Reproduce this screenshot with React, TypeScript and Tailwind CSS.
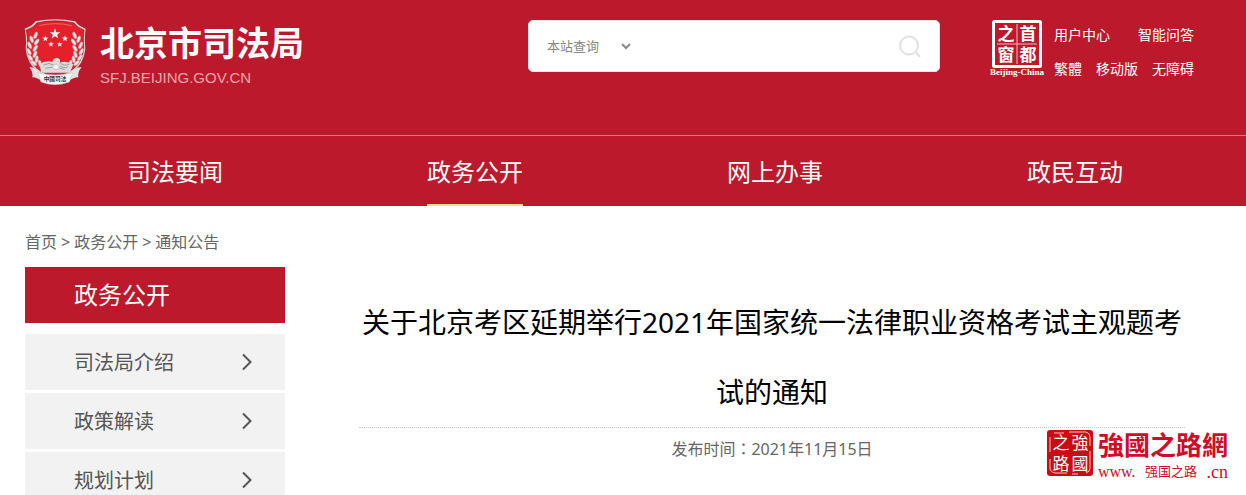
const NAV = ["司法要闻", "政务公开", "网上办事", "政民互动"];
const ACTIVE = "政务公开";

const SIDE_MENU = ["司法局介绍", "政策解读", "规划计划"];

const TOP_LINKS = [
    { gap: "gap-7", items: ["用户中心", "智能问答"] },
    { gap: "gap-3.5", items: ["繁體", "移动版", "无障碍"] },
];

const STARS = [
    { x: 105, y: 60, s: 17 },
    { x: 76, y: 74, s: 10 },
    { x: 135, y: 74, s: 10 },
    { x: 93, y: 91, s: 9 },
    { x: 119, y: 91, s: 9 },
];

// Wheat leaves on the left side of the shield, mirrored for the right
const LEAVES = [
    { x: 47, y: 64, r: 22 },
    { x: 35, y: 76, r: -20 },
    { x: 50, y: 84, r: 34 },
    { x: 29, y: 94, r: -24 },
    { x: 46, y: 103, r: 32 },
    { x: 27, y: 113, r: -30 },
    { x: 45, y: 121, r: 22 },
    { x: 31, y: 131, r: -38 },
    { x: 50, y: 136, r: 8 },
    { x: 41, y: 147, r: -48 },
    { x: 60, y: 149, r: -14 },
];

function Leaves() {
    return (
        <g fill="#e9e4e4" stroke="#c5868a" strokeWidth="1.5">
            {LEAVES.map((l, i) => (
                <ellipse key={i} cx={l.x} cy={l.y} rx="5" ry="11" transform={`rotate(${l.r} ${l.x} ${l.y})`} />
            ))}
        </g>
    );
}

function Emblem() {
    return (
        <svg viewBox="12 12 192 204" className="h-[68px] w-16 shrink-0" aria-hidden="true">
            <path
                d="M46 22Q105 9 166 22Q174 36 197 44Q193 72 196 104Q193 150 152 178L105 200L60 178Q20 150 17 104Q20 72 14 44Q38 36 46 22Z"
                fill="#d9cfcf"
            />
            <path
                d="M50 27Q105 14 162 27Q171 41 192 48Q188 74 191 104Q187 150 146 174L105 190L66 174Q26 150 22 104Q25 74 19 48Q42 41 50 27Z"
                fill="#e5202a"
                stroke="#8f1620"
                strokeWidth="2"
            />
            <path d="M57 35Q105 23 155 35" fill="none" stroke="#f0666c" strokeWidth="3" />
            {STARS.map((p, i) => (
                <path
                    key={i}
                    transform={`translate(${p.x} ${p.y}) scale(${p.s / 10})`}
                    d="M0-10L2.4-3.2L9.5-3.1L3.8 1.2L5.9 8.1L0 4L-5.9 8.1L-3.8 1.2L-9.5-3.1L-2.4-3.2Z"
                    fill="#fff1f1"
                />
            ))}
            <Leaves />
            <g transform="translate(211 0) scale(-1 1)">
                <Leaves />
            </g>
            <path d="M58 150Q78 138 97 144Q99 132 111 132Q124 134 119 146Q138 139 160 151L150 176H64Z" fill="#dcdada" />
            <path
                d="M70 153Q88 144 101 153M121 147Q131 158 148 150M120 155Q132 166 144 158M76 163Q105 155 134 167"
                fill="none"
                stroke="#858080"
                strokeWidth="2"
            />
            <path d="M96 160Q110 142 118 160Q112 172 96 160Z" fill="#f5f5f5" stroke="#aaa" strokeWidth="1.5" />
            <path d="M28 160Q42 158 60 174L64 202Q55 191 37 190Q40 174 28 160Z" fill="#e3e1e1" />
            <path d="M185 160Q170 158 152 174L147 202Q157 191 175 190Q172 174 185 160Z" fill="#e3e1e1" />
            <path d="M54 176Q105 190 158 176L148 204Q105 220 63 204Z" fill="#f7f7f7" stroke="#c4c0c0" strokeWidth="1.5" />
            <text x="105" y="202" textAnchor="middle" fontSize="17" fontWeight="700" fill="#333">
                中國司法
            </text>
        </svg>
    );
}

function CapitalWindow() {
    return (
        <a href="#" className="flex w-[54px] flex-col items-center text-white">
            <svg viewBox="0 0 50 48" className="h-12 w-[50px]">
                <rect x="1.5" y="1.5" width="47" height="45" rx="1" fill="none" stroke="#fff" strokeWidth="3" />
                <path d="M25 4V44M5 24H45" stroke="#f0b9bf" strokeWidth="1" />
                <g fill="#fff" fontSize="17" fontWeight="700" textAnchor="middle">
                    <text>
                        <tspan x="36" y="20">首</tspan>
                        <tspan x="36" y="41">都</tspan>
                    </text>
                    <text>
                        <tspan x="14" y="20">之</tspan>
                        <tspan x="14" y="41">窗</tspan>
                    </text>
                </g>
            </svg>
            <span className="font-['Liberation_Serif',serif] text-[9px] leading-[9px] font-bold whitespace-nowrap">Beijing-China</span>
        </a>
    );
}

function SearchBox() {
    return (
        <form className="flex h-13 w-[412px] items-center rounded-[5px] border border-[#e6e6e6] bg-white px-[18px]">
            <div className="relative">
                <select
                    aria-label="查询范围"
                    className="block w-[88px] appearance-none bg-transparent text-[13px] leading-5 text-[#888] outline-none"
                >
                    <option>本站查询</option>
                </select>
                <svg viewBox="0 0 10 8" className="pointer-events-none absolute top-1.5 right-1 h-2 w-2.5" fill="none" stroke="#8a8a8a" strokeWidth="2">
                    <path d="M1 2L5 6L9 2" />
                </svg>
            </div>
            <input type="text" aria-label="搜索" className="h-10 min-w-0 flex-1 bg-transparent px-3 text-sm outline-none" />
            <button type="submit" aria-label="查询">
                <svg viewBox="0 0 24 24" className="h-6 w-6" fill="none" stroke="#e2e2e2" strokeWidth="2">
                    <circle cx="12" cy="11.5" r="9" />
                    <path d="M18 17.5L23 23" />
                </svg>
            </button>
        </form>
    );
}

function SiteStamp() {
    return (
        <div className="absolute top-[430px] right-[18px] flex items-start gap-[5px] text-[#d20a28]">
            <svg viewBox="0 0 46 46" className="h-[46px] w-[46px]">
                <rect width="46" height="46" rx="3" fill="#c90d12" />
                <path
                    d="M7 3H17M22 2H39Q43 3 43 7V16M43 21V38Q43 42 39 43M31 44H25M20 43H8Q3 42 3 38V29M3 22V7"
                    fill="none"
                    stroke="#f5c4c4"
                    strokeWidth="1"
                />
                <g fill="#fff" fontSize="17" fontWeight="400" textAnchor="middle">
                    <text>
                        <tspan x="33" y="19">強</tspan>
                        <tspan x="33" y="40">國</tspan>
                    </text>
                    <text>
                        <tspan x="14" y="19">之</tspan>
                        <tspan x="14" y="40">路</tspan>
                    </text>
                </g>
            </svg>
            <div>
                <p className="text-[26px] leading-[30px] font-bold">強國之路網</p>
                <p className="flex items-center justify-between font-['Liberation_Serif','Noto_Sans_CJK_SC',serif] leading-[18px]">
                    <span className="text-base">www.</span>
                    <span className="text-[13px]">强国之路</span>
                    <span className="text-lg leading-4">.cn</span>
                </p>
            </div>
        </div>
    );
}

export default function App() {
    return (
        <div className="relative bg-white font-['Noto_Sans','Noto_Sans_CJK_SC',sans-serif]">
            <header className="bg-[#bc1a2c] text-white">
                <div className="flex h-[135px] items-start justify-between pr-[52px] pl-6">
                    <a href="#" className="flex items-start gap-3 pt-[18px]">
                        <Emblem />
                        <div className="pt-1">
                            <h1 className="text-[34px] leading-[42px] font-bold">北京市司法局</h1>
                            <p className="pt-1 font-['Liberation_Sans',sans-serif] text-[15px] leading-5 text-[#e9a5ac]">SFJ.BEIJING.GOV.CN</p>
                        </div>
                    </a>
                    <div className="flex items-start gap-[50px] pt-5">
                        <SearchBox />
                        <div className="flex gap-2.5">
                            <CapitalWindow />
                            <div className="flex flex-col gap-3.5 pt-[5px]">
                                {TOP_LINKS.map((row, i) => (
                                    <div key={i} className={`flex text-sm leading-5 ${row.gap}`}>
                                        {row.items.map((item) => (
                                            <a key={item} href="#">{item}</a>
                                        ))}
                                    </div>
                                ))}
                            </div>
                        </div>
                    </div>
                </div>
                <nav className="border-t border-[#dd8088] pr-[21px] pl-[25px]">
                    <ul className="grid grid-cols-4">
                        {NAV.map((item) => (
                            <li key={item} className="flex justify-center">
                                <a
                                    href="#"
                                    className={`h-[70px] border-b-2 text-2xl leading-[72px] ${item === ACTIVE ? "border-[#f5dc8c]" : "border-transparent"}`}
                                >
                                    {item}
                                </a>
                            </li>
                        ))}
                    </ul>
                </nav>
            </header>

            <div className="px-[25px] pt-6">
                <div className="flex gap-1 text-base leading-6 text-[#666]">
                    <a href="#">首页</a>
                    <span>&gt;</span>
                    <a href="#">政务公开</a>
                    <span>&gt;</span>
                    <a href="#">通知公告</a>
                </div>
            </div>

            <div className="flex items-start gap-[74px] pt-[13px] pr-[61px] pl-[25px]">
                <aside className="w-[260px] shrink-0">
                    <h2 className="mb-[11px] bg-[#bc1a2c] pl-[49px] text-2xl leading-14 text-white">政务公开</h2>
                    <ul className="flex flex-col gap-[3px]">
                        {SIDE_MENU.map((item) => (
                            <li key={item}>
                                <a
                                    href="#"
                                    className="flex h-14 items-center justify-between bg-[#f2f2f2] pr-8 pl-[49px] text-xl leading-14 text-[#555]"
                                >
                                    <span className="pt-0.5">{item}</span>
                                    <svg viewBox="0 0 12 18" className="h-[18px] w-3" fill="none" stroke="#555" strokeWidth="2">
                                        <path d="M2 1.5L9.5 9L2 16.5" />
                                    </svg>
                                </a>
                            </li>
                        ))}
                    </ul>
                </aside>
                <article className="flex-1 pt-5 text-center">
                    <h1 className="border-b border-dotted border-[#ccc] text-[28px] leading-[70px] text-black">
                        关于北京考区延期举行2021年国家统一法律职业资格考试主观题考试的通知
                    </h1>
                    <p className="pt-2 text-base leading-6 text-[#666]">
                        发布时间<span lang="zh-TW" className="font-['Noto_Sans_CJK_TC',sans-serif]">：</span>2021年11月15日
                    </p>
                </article>
            </div>

            <SiteStamp />
        </div>
    );
}
